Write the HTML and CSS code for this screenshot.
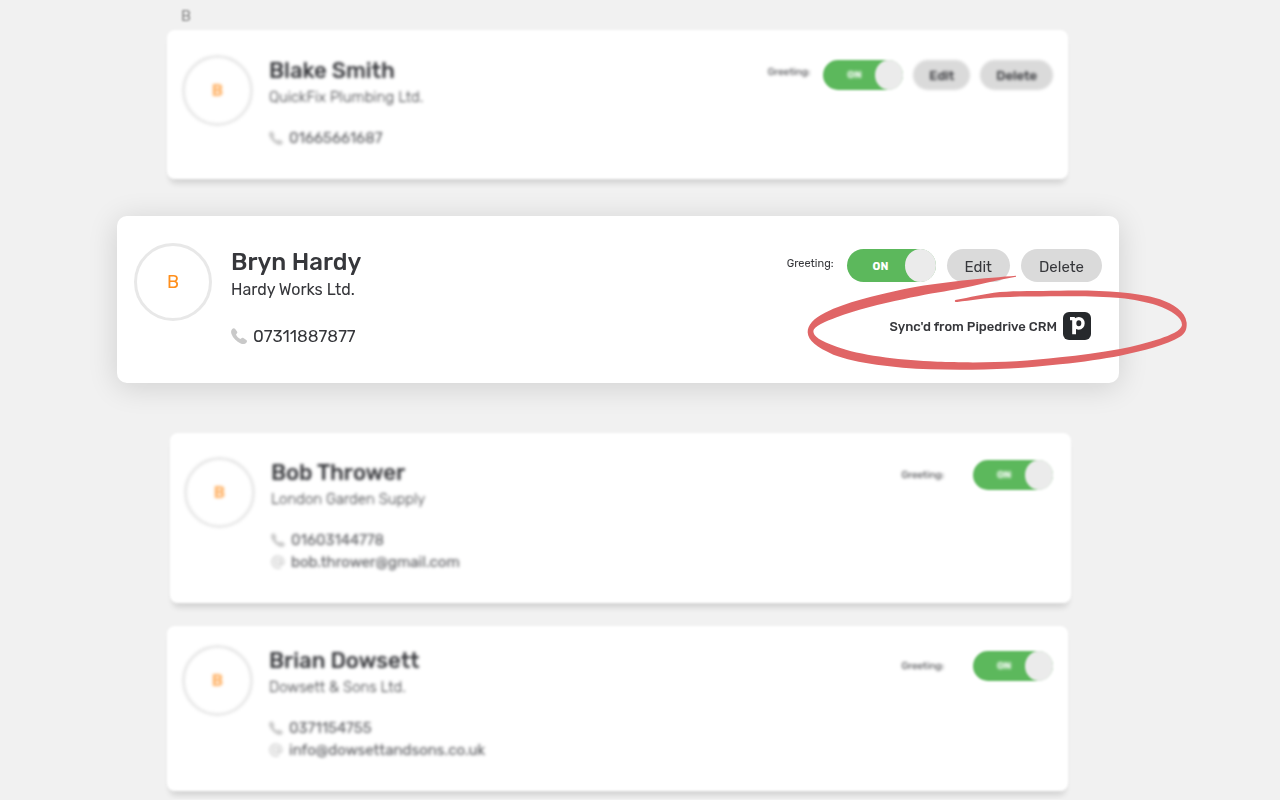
FILE: index.html
```html
<!DOCTYPE html>
<html lang="en">
<head>
    <meta charset="UTF-8">
    <meta name="viewport" content="width=device-width, initial-scale=1.0">
    <title>Contacts</title>
    <link rel="stylesheet" href="styles.css">
</head>
<body>
    <!-- Shared icons -->
    <svg class="sprite" aria-hidden="true">
        <symbol id="phone" viewBox="0 0 16 16">
            <path d="M1 1.2C2 .1 3.300 -.1 4 .8L6 3.600C6.500 4.400 6.400 5 5.800 5.600L5 6.500C5.800 8.400 7.500 10.200 9.500 11L10.400 10.200C11 9.600 11.700 9.500 12.400 10L15.300 12C16.200 12.700 16.200 13.500 15.500 14.400C14 16.300 11.800 16.300 9.700 15.400C5.500 13.600 2 10 .5 6C-.2 4.200 0 2.300 1 1.200Z"/>
        </symbol>
        <symbol id="at" viewBox="0 0 16 16">
            <circle cx="8" cy="8" r="3" fill="none" stroke="currentColor" stroke-width="1.500"/>
            <path d="M11 5V9.200C11 12 14.800 11.800 14.800 8A6.800 6.800 0 1 0 11.500 13.900" fill="none" stroke="currentColor" stroke-width="1.500"/>
        </symbol>
    </svg>

    <main class="contacts">
        <h1 class="letter">B</h1>

        <article class="card faded">
            <div class="avatar">B</div>
            <div class="info">
                <h2>Blake Smith</h2>
                <p class="company">QuickFix Plumbing Ltd.</p>
                <ul class="details">
                    <li><svg class="icon"><use href="#phone"/></svg>01665661687</li>
                </ul>
            </div>
            <div class="side">
                <div class="actions">
                    <label class="greeting" for="greet-blake">Greeting:</label>
                    <span class="toggle">
                        <input type="checkbox" id="greet-blake" checked>
                        <span class="on">ON</span>
                        <span class="knob"></span>
                    </span>
                    <button type="button">Edit</button>
                    <button type="button">Delete</button>
                </div>
            </div>
        </article>

        <article class="card featured">
            <div class="avatar">B</div>
            <div class="info">
                <h2>Bryn Hardy</h2>
                <p class="company">Hardy Works Ltd.</p>
                <ul class="details">
                    <li><svg class="icon"><use href="#phone"/></svg>07311887877</li>
                </ul>
            </div>
            <div class="side">
                <div class="actions">
                    <label class="greeting" for="greet-bryn">Greeting:</label>
                    <span class="toggle">
                        <input type="checkbox" id="greet-bryn" checked>
                        <span class="on">ON</span>
                        <span class="knob"></span>
                    </span>
                    <button type="button">Edit</button>
                    <button type="button">Delete</button>
                </div>
                <div class="sync">
                    <span>Sync'd from Pipedrive CRM</span>
                    <svg class="pipedrive" viewBox="0 0 28 28" role="img" aria-label="Pipedrive">
                        <rect width="28" height="28" rx="6" fill="#26292c"/>
                        <ellipse cx="15.800" cy="11.300" rx="4.200" ry="4.700" fill="none" stroke="#fff" stroke-width="3.400"/>
                        <path d="M7 5H11.500L13 7V22.300H9.200V8.200H7Z" fill="#fff"/>
                    </svg>
                </div>
            </div>
            <svg class="scribble" viewBox="99 132 1161 300" aria-hidden="true">
                <path d="M738 137C660 143 500 156 400 178C310 198 230 216 165 248C130 266 113 284 113 307C114 332 140 352 190 374C260 400 370 413 480 418C600 422 740 418 870 403C940 396 1000 386 1050 377C1120 362 1190 344 1230 320C1246 310 1251 298 1250 278C1246 244 1210 222 1170 208C1130 196 1090 190 1050 187C1000 182 940 181 870 182C800 183 740 182 690 186C640 192 600 202 556 210C552 214 556 217 562 216C600 212 650 203 690 202C750 198 810 200 870 199C940 198 1000 200 1050 204C1090 208 1130 216 1160 226C1205 242 1236 262 1236 285C1234 302 1200 316 1170 326C1130 338 1090 350 1050 357C990 368 930 376 870 382C770 394 680 398 580 397C540 396 510 396 480 394C380 388 270 376 200 350C150 332 130 320 130 303C132 290 165 275 200 262C260 240 330 222 400 208C460 194 510 187 560 178C620 166 680 150 738 140Z"/>
            </svg>
        </article>

        <article class="card faded shifted">
            <div class="avatar">B</div>
            <div class="info">
                <h2>Bob Thrower</h2>
                <p class="company">London Garden Supply</p>
                <ul class="details">
                    <li><svg class="icon"><use href="#phone"/></svg>01603144778</li>
                    <li><svg class="icon"><use href="#at"/></svg>bob.thrower@gmail.com</li>
                </ul>
            </div>
            <div class="side">
                <div class="actions wide">
                    <label class="greeting" for="greet-bob">Greeting:</label>
                    <span class="toggle">
                        <input type="checkbox" id="greet-bob" checked>
                        <span class="on">ON</span>
                        <span class="knob"></span>
                    </span>
                </div>
            </div>
        </article>

        <article class="card faded compact">
            <div class="avatar">B</div>
            <div class="info">
                <h2>Brian Dowsett</h2>
                <p class="company">Dowsett &amp; Sons Ltd.</p>
                <ul class="details">
                    <li><svg class="icon"><use href="#phone"/></svg>0371154755</li>
                    <li><svg class="icon"><use href="#at"/></svg>info@dowsettandsons.co.uk</li>
                </ul>
            </div>
            <div class="side">
                <div class="actions wide">
                    <label class="greeting" for="greet-brian">Greeting:</label>
                    <span class="toggle">
                        <input type="checkbox" id="greet-brian" checked>
                        <span class="on">ON</span>
                        <span class="knob"></span>
                    </span>
                </div>
            </div>
        </article>
    </main>
</body>
</html>
```

FILE: styles.css
```css
* {
    box-sizing: border-box;
}
body {
    margin: 0;
    background-color: #f1f1f1;
    color: #36373b;
    font-family: Rubik, Roboto, sans-serif;
    overflow-x: hidden;
}
h1, h2, p, ul {
    margin: 0;
    padding: 0;
}
.sprite {
    display: block;
    width: 0;
    height: 0;
}
.contacts {
    padding: 6px 161px 8px 117px;
}
.letter {
    margin: 0 64px 4px;
    font-size: 15px;
    line-height: 20px;
    font-weight: 400;
    color: #888;
    filter: blur(1px);
}
.card {
    position: relative;
    display: flex;
    align-items: flex-start;
    gap: 16px;
    margin: 0 51px 23px 50px;
    padding: 25px 15px 30px;
    background-color: #fff;
    border-radius: 8px;
    box-shadow: 0 7px 6px -3px rgba(0, 0, 0, 0.14);
}
.faded {
    filter: blur(1px);
}
.faded .avatar, .faded .info, .faded .greeting, .faded .on, .faded button {
    filter: blur(1px);
}
.shifted {
    margin-left: 53px;
    margin-right: 48px;
    padding: 24px 18px 30px 14px;
}
.compact {
    margin-bottom: 0;
    padding-top: 19px;
}
.avatar {
    display: flex;
    align-items: center;
    justify-content: center;
    flex: none;
    width: 71px;
    height: 71px;
    border: 3px solid #e8e8e8;
    border-radius: 50%;
    font-size: 16px;
    color: #ff8f1c;
}
.faded .avatar {
    color: #ffb266;
    font-weight: 700;
}
.info {
    flex: 1;
    margin-top: 2px;
}
h2 {
    font-size: 22px;
    line-height: 28px;
    font-weight: 500;
}
.company {
    font-size: 15px;
    line-height: 24px;
    font-weight: 300;
}
.details {
    margin-top: 18px;
    list-style: none;
    font-size: 15px;
    line-height: 22px;
}
.faded .details {
    color: #55565a;
}
.details li {
    display: flex;
    align-items: center;
    gap: 6px;
}
.icon {
    width: 14px;
    height: 14px;
    color: #c9c9c9;
    fill: currentColor;
}
.side {
    margin-top: 5px;
}
.shifted .side {
    margin-top: 3px;
}
.compact .side {
    margin-top: 6px;
}
.actions {
    display: flex;
    justify-content: flex-end;
    gap: 10px;
}
.greeting {
    margin-right: 3px;
    font-size: 10px;
    line-height: 24px;
}
.wide .greeting {
    margin-right: 19px;
    line-height: 30px;
}
.toggle {
    position: relative;
    display: flex;
    align-items: center;
    justify-content: space-between;
    width: 80px;
    height: 30px;
    padding-left: 24px;
    border-radius: 17px;
    background-color: #5cb85c;
    color: #fff;
    font-size: 10px;
    font-weight: 700;
}
.toggle input {
    position: absolute;
    inset: 0;
    width: 100%;
    height: 100%;
    margin: 0;
    opacity: 0;
    cursor: pointer;
}
.knob {
    width: 28px;
    height: 30px;
    border-radius: 50%;
    background-color: #ebebeb;
}
button {
    height: 30px;
    padding: 0 16px;
    border: none;
    border-radius: 17px;
    background-color: #dadada;
    color: #36373b;
    font-family: inherit;
    font-size: 13px;
    font-weight: 500;
    cursor: pointer;
}

/* Highlighted contact */
.featured {
    gap: 19px;
    margin: 37px 0 50px;
    padding: 27px 17px 35px;
    border-radius: 10px;
    box-shadow: 0 4px 30px rgba(0, 0, 0, 0.14);
}
.featured .avatar {
    width: 78px;
    height: 78px;
    font-size: 18px;
}
.featured .info {
    margin-top: 4px;
}
.featured h2 {
    font-size: 24px;
    line-height: 31px;
}
.featured .company {
    font-size: 16px;
    font-weight: 400;
}
.featured .details {
    margin-top: 22px;
    font-size: 17px;
    line-height: 24px;
}
.featured .icon {
    width: 16px;
    height: 16px;
}
.featured .side {
    margin-top: 6px;
}
.featured .actions {
    gap: 11px;
}
.featured .greeting {
    margin-right: 2px;
    font-size: 11px;
    line-height: 29px;
}
.featured .toggle {
    width: 89px;
    height: 33px;
    padding-left: 26px;
    font-size: 11px;
}
.featured .on {
    padding-top: 2px;
}
.featured .knob {
    width: 31px;
    height: 33px;
}
.featured button {
    height: 33px;
    padding: 2px 18px 0;
    font-size: 15px;
    font-weight: 400;
}
.sync {
    display: flex;
    align-items: center;
    justify-content: flex-end;
    gap: 6px;
    margin: 30px 11px 0 0;
    font-size: 13px;
    font-weight: 500;
}
.pipedrive {
    width: 28px;
    height: 28px;
}
.scribble {
    position: absolute;
    top: 58px;
    right: -71px;
    width: 387px;
    height: 100px;
    fill: #e06566;
    pointer-events: none;
}
```
